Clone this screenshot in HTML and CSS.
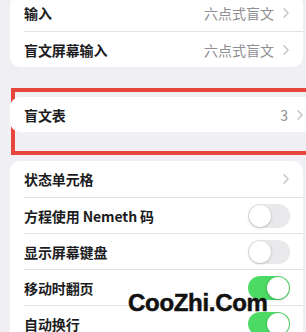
FILE: index.html
```html
<!DOCTYPE html>
<html lang="zh">
<head>
<meta charset="utf-8">
<link rel="stylesheet" href="styles.css">
</head>
<body>
<div class="page">
  <div class="card card-top">
    <div class="row">
      <span class="label">输入</span>
      <span class="value">六点式盲文<svg class="chev" viewBox="0 0 7 12"><polyline points="1,1 6,6 1,11"/></svg></span>
    </div>
    <div class="row">
      <span class="label">盲文屏幕输入</span>
      <span class="value">六点式盲文<svg class="chev" viewBox="0 0 7 12"><polyline points="1,1 6,6 1,11"/></svg></span>
    </div>
  </div>

  <div class="highlight">
    <div class="card">
      <div class="row row-short">
        <span class="label">盲文表</span>
        <span class="value">3<svg class="chev" viewBox="0 0 7 12"><polyline points="1,1 6,6 1,11"/></svg></span>
      </div>
    </div>
  </div>

  <div class="card card-bottom">
    <div class="row">
      <span class="label">状态单元格</span>
      <span class="value"><svg class="chev" viewBox="0 0 7 12"><polyline points="1,1 6,6 1,11"/></svg></span>
    </div>
    <div class="row">
      <span class="label">方程使用 Nemeth 码</span>
      <span class="toggle"><span class="knob"></span></span>
    </div>
    <div class="row">
      <span class="label">显示屏幕键盘</span>
      <span class="toggle"><span class="knob"></span></span>
    </div>
    <div class="row">
      <span class="label">移动时翻页</span>
      <span class="toggle on"><span class="knob"></span></span>
    </div>
    <div class="row">
      <span class="label">自动换行</span>
      <span class="toggle on"><span class="knob"></span></span>
    </div>
  </div>
</div>
<div class="watermark">CooZhi.Com</div>
</body>
</html>
```

FILE: styles.css
```css
html, body {
  margin: 0;
  padding: 0;
  overflow: hidden;
}
body {
  width: 306px;
  height: 332px;
  background: #efeff4;
  font-family: "Noto Sans CJK SC", "Noto Sans", sans-serif;
  position: relative;
}
.page {
  display: flex;
  flex-direction: column;
  padding: 0 3px 0 10px;
}
.card {
  background: #ffffff;
  border-radius: 10px;
  padding-left: 14px;
}
.card-top {
  margin-top: -5px;
}
.row {
  height: 36px;
  display: flex;
  align-items: center;
  justify-content: space-between;
  padding-right: 14px;
  box-sizing: border-box;
}
.row + .row {
  border-top: 1px solid #e2e2e6;
}
.row-short {
  height: 35px;
}
.label {
  font-size: 14px;
  font-weight: 600;
  color: #1c1c1e;
  letter-spacing: -0.1px;
}
.value {
  display: flex;
  align-items: center;
  gap: 9px;
  font-size: 14px;
  color: #8e8e93;
}
.chev {
  width: 6px;
  height: 10px;
  fill: none;
  stroke: #c3c3c8;
  stroke-width: 1.6;
  stroke-linecap: round;
  stroke-linejoin: round;
}
.highlight {
  margin: 21px -10px 0 1px;
  border: 4px solid #e8453c;
  padding: 5px 0 19px 0;
}
.highlight .card {
  margin-left: -5px;
  width: 293px;
}
.card-bottom {
  margin-top: 6px;
}
.toggle {
  width: 42px;
  height: 24px;
  border-radius: 12px;
  background: #e9e9eb;
  position: relative;
  flex: none;
  margin-right: -1px;
}
.knob {
  position: absolute;
  top: 1px;
  left: 1px;
  width: 22px;
  height: 22px;
  border-radius: 50%;
  background: #ffffff;
  box-shadow: 0 1px 3px rgba(0, 0, 0, 0.18), 0 0 0 0.5px rgba(0, 0, 0, 0.06);
}
.toggle.on {
  background: #4cd964;
}
.toggle.on .knob {
  left: 19px;
}
.watermark {
  position: absolute;
  left: 128px;
  top: 291px;
  font-family: "Liberation Sans", Arial, sans-serif;
  font-weight: bold;
  font-size: 24px;
  line-height: 24px;
  color: #111111;
  letter-spacing: -0.3px;
  -webkit-text-stroke: 0.5px #111111;
}
```
